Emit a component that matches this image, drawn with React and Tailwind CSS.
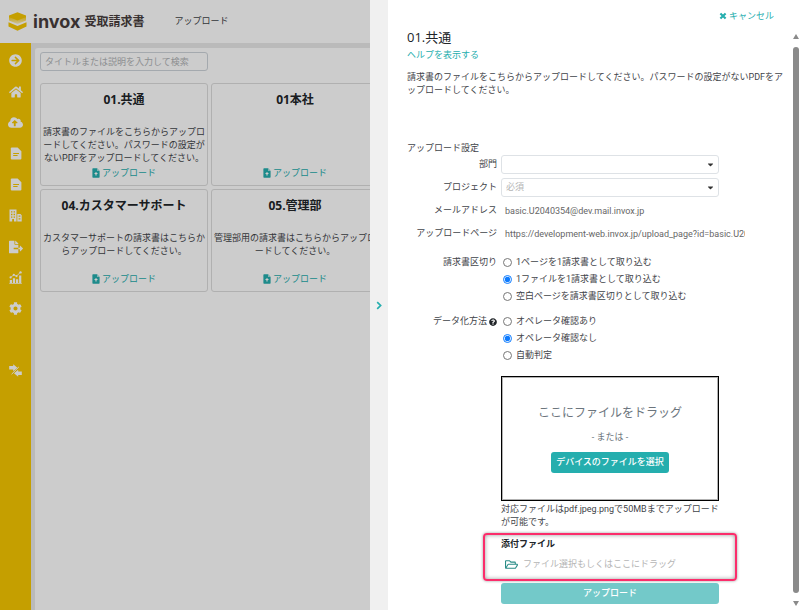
import React, { useState } from 'react';
import {
  FaArrowCircleRight,
  FaCaretDown,
  FaCloudUploadAlt,
  FaCog,
  FaFileExport,
  FaHome,
  FaQuestionCircle,
  FaRegFolderOpen
} from 'react-icons/fa';

const HELP_TEXT = '請求書のファイルをこちらからアップロードしてください。パスワードの設定がないPDFをアップロードしてください。';

const cards = [
  { title: '01.共通', text: HELP_TEXT },
  { title: '01本社', text: '' },
  { title: '04.カスタマーサポート', text: 'カスタマーサポートの請求書はこちらからアップロードしてください。' },
  { title: '05.管理部', text: '管理部用の請求書はこちらからアップロードしてください。' }
];

const splitOptions = [
  '1ページを1請求書として取り込む',
  '1ファイルを1請求書として取り込む',
  '空白ページを請求書区切りとして取り込む'
];

const methodOptions = ['オペレータ確認あり', 'オペレータ確認なし', '自動判定'];

// ロゴマーク
const LogoMark = () => (
  <svg viewBox="0 0 19 19" className="w-[19px] h-[19px]" aria-hidden="true">
    <defs>
      <linearGradient id="logo-fade" x1="0" y1="0" x2="0" y2="1">
        <stop offset="0" stopColor="#f7c700" />
        <stop offset="1" stopColor="#fff3c0" />
      </linearGradient>
    </defs>
    <path d="M1 4 V8.4 L9.5 12 L18 8.4 V4 Z" fill="url(#logo-fade)" />
    <path d="M9.5 0.2 L18 3.6 V5 L9.5 8.6 L1 5 V3.6 Z" fill="#f7c700" />
    <path d="M0.5 10.2 L9.5 14 L18.5 10.2 V14.4 L9.5 18.8 L0.5 14.4 Z" fill="#f7c700" />
  </svg>
);

// 書類アイコン
const DocIcon = () => (
  <svg viewBox="0 0 12 13" className="w-3 h-[13px]" aria-hidden="true">
    <path
      d="M1.8 0.5 H7.6 L11.4 4.2 V11.4 Q11.4 12.4 10.4 12.4 H1.8 Q0.8 12.4 0.8 11.4 V1.5 Q0.8 0.5 1.8 0.5 Z"
      fill="currentColor"
    />
    <path d="M3.2 6 H9 V7 H3.2 Z M3.2 8 H7.6 V9 H3.2 Z" fill="#f7c700" />
  </svg>
);

// 建物アイコン
const BuildingIcon = () => (
  <svg viewBox="0 0 13 13" className="w-[13px] h-[13px]" fill="currentColor" aria-hidden="true">
    <path
      fillRule="evenodd"
      d="M0.5 0.5 H7.5 V12.5 H5 V10 H3.2 V12.5 H0.5 Z M2 2.2 V3.6 H3.4 V2.2 Z M4.6 2.2 V3.6 H6 V2.2 Z M2 4.8 V6.2 H3.4 V4.8 Z M4.6 4.8 V6.2 H6 V4.8 Z M2 7.4 V8.8 H3.4 V7.4 Z M4.6 7.4 V8.8 H6 V7.4 Z"
    />
    <path
      fillRule="evenodd"
      d="M8.3 5 H11.5 L12.7 6.2 V12.5 H8.3 Z M9.6 6.6 V7.8 H11.4 V6.6 Z M9.6 9.2 V10.4 H11.4 V9.2 Z"
    />
  </svg>
);

// グラフアイコン
const ChartIcon = () => (
  <svg viewBox="0 0 13 13" className="w-[13px] h-[13px]" fill="currentColor" aria-hidden="true">
    <path d="M0.8 9 H3 V12 H0.8 Z M3.9 7.2 H6.1 V12 H3.9 Z M7 8.2 H9.2 V12 H7 Z M10.1 4.6 H12.3 V12 H10.1 Z M0.3 12 H12.8 V12.8 H0.3 Z" />
    <path d="M1.4 6.6 L4.8 3.8 L7.4 5.2 L11.6 1.2" fill="none" stroke="currentColor" strokeWidth="0.8" />
    <circle cx="1.6" cy="6.4" r="1.1" />
    <circle cx="4.8" cy="3.9" r="1.1" />
    <circle cx="7.5" cy="5.1" r="1.1" />
    <circle cx="11.5" cy="1.4" r="1.2" />
  </svg>
);

// 切り替えアイコン
const SwapIcon = () => (
  <svg viewBox="0 0 13 13" className="w-[13px] h-[13px]" fill="currentColor" aria-hidden="true">
    <path d="M0.2 2 H4.2 V0.2 L8.4 3.7 L4.2 7.2 V5.4 H0.2 Z" />
    <path d="M12.8 7.6 H9.2 V5.8 L5 9.3 L9.2 12.8 V11 H12.8 Z" />
    <path d="M2.6 10.2 L9.8 3" stroke="currentColor" strokeWidth="1" />
  </svg>
);

// アップロード用ファイルアイコン
const FileUpIcon = () => (
  <svg viewBox="0 0 8 10" className="w-2 h-[10px]" aria-hidden="true">
    <path d="M1 0.3 H5 L7.6 2.9 V9 Q7.6 9.7 6.9 9.7 H1 Q0.4 9.7 0.4 9 V1 Q0.4 0.3 1 0.3 Z" fill="#25aeae" />
    <path d="M5 0.3 V2.9 H7.6 Z" fill="#a5dede" />
    <path d="M4 4 L6 6 H4.6 V7.6 H3.4 V6 H2 Z" fill="#fff" />
  </svg>
);

const CloseIcon = () => (
  <svg viewBox="0 0 8 8" className="w-2 h-2" aria-hidden="true">
    <path d="M1.4 1.4 L6.6 6.6 M6.6 1.4 L1.4 6.6" stroke="currentColor" strokeWidth="2.1" />
  </svg>
);

const ChevronIcon = () => (
  <svg viewBox="0 0 6 9" className="w-[6px] h-[9px]" aria-hidden="true">
    <path d="M1.2 1.2 L4.6 4.5 L1.2 7.8" fill="none" stroke="currentColor" strokeWidth="1.7" />
  </svg>
);

const menuItems = [
  { label: '開く', icon: <FaArrowCircleRight size={13} /> },
  { label: 'ホーム', icon: <FaHome size={14} /> },
  { label: 'アップロード', icon: <FaCloudUploadAlt size={15} /> },
  { label: '請求書', icon: <DocIcon /> },
  { label: '書類', icon: <DocIcon /> },
  { label: '取引先', icon: <BuildingIcon /> },
  { label: '出力', icon: <FaFileExport size={14} /> },
  { label: 'レポート', icon: <ChartIcon /> },
  { label: '設定', icon: <FaCog size={13} /> }
];

const UploadCard = ({ title, text }) => (
  <section className="flex flex-col items-center h-[103px] pt-2 pb-1 px-[2px] border border-[#dcdcdc] rounded-[3px] text-center">
    <h2 className="text-[12px] leading-4 font-bold text-[#212529] font-['Open_Sans','Noto_Sans_CJK_JP',sans-serif]">{title}</h2>
    <p className="mt-[18px] text-[9px] leading-[13px] break-all">{text}</p>
    <a href="#upload" className="mt-auto flex items-center gap-[2px] text-[9px] leading-4 text-[#25aeae]">
      <FileUpIcon />
      アップロード
    </a>
  </section>
);

const SelectField = ({ id, label, placeholder }) => (
  <>
    <label htmlFor={id} className="text-right">{label}</label>
    <div className="relative w-[218px]">
      <select
        id={id}
        defaultValue=""
        className="block w-full h-[19px] px-1 appearance-none bg-white border border-[#dee2e6] rounded-[3px] text-[9px] text-[#b5b5b5]"
      >
        <option value="">{placeholder}</option>
      </select>
      <FaCaretDown size={9} className="absolute right-1 top-[5px] text-[#333] pointer-events-none" />
    </div>
  </>
);

const RadioGroup = ({ name, options, value, onChange }) => (
  <div className="flex flex-col">
    {options.map((option) => (
      <label key={option} className="flex items-center gap-1 h-[17px] pl-[2px] w-fit">
        <input
          type="radio"
          name={name}
          checked={value === option}
          onChange={() => onChange(option)}
          className="w-[9px] h-[9px] accent-[#0d7bff]"
        />
        {option}
      </label>
    ))}
  </div>
);

const App = () => {
  const [split, setSplit] = useState(splitOptions[1]);
  const [method, setMethod] = useState(methodOptions[1]);

  return (
    <div
      lang="ja"
      className="relative flex flex-col min-h-screen overflow-hidden bg-[#e9e9e9] text-[9px] leading-[13px] text-[#3f4449] font-['Roboto','Noto_Sans_CJK_JP',sans-serif]"
    >
      {/* ヘッダー */}
      <header className="flex items-center h-[43px] pl-2 bg-white">
        <LogoMark />
        <span className="ml-[6px] text-[18px] leading-5 font-bold text-[#463c3c] font-['Inter',sans-serif]">invox</span>
        <span className="ml-1 text-[12px] leading-5 font-bold text-[#463c3c]">受取請求書</span>
        <nav className="ml-[30px]">
          <a href="#upload">アップロード</a>
        </nav>
      </header>

      <div className="flex flex-1">
        {/* サイドメニュー */}
        <nav className="flex flex-col items-center w-[31px] pt-[2px] bg-[#f7c700] text-white">
          {menuItems.map((item) => (
            <button key={item.label} type="button" aria-label={item.label} className="grid place-items-center w-full h-[31px]">
              {item.icon}
            </button>
          ))}
          <button type="button" aria-label="切り替え" className="grid place-items-center w-full h-[31px] mt-[31px]">
            <SwapIcon />
          </button>
        </nav>

        <main className="flex-1 mt-[5px] ml-1 pl-[5px] pt-1 bg-white rounded-tl-[3px]">
          <input
            type="text"
            aria-label="検索"
            placeholder="タイトルまたは説明を入力して検索"
            className="block w-[168px] h-[19px] px-1 border border-[#ced4da] rounded-[3px] text-[9px] placeholder:text-[#b0b3b6]"
          />
          <div className="grid grid-cols-[168px_168px] gap-[3px] mt-3">
            {cards.map((card) => (
              <UploadCard key={card.title} title={card.title} text={card.text} />
            ))}
          </div>
        </main>
      </div>

      {/* 背景の暗転 */}
      <div className="absolute inset-0 bg-black/20" />

      {/* アップロードパネル */}
      <aside className="absolute inset-y-0 right-0 flex w-[430px] max-w-full bg-white">
        <button type="button" aria-label="閉じる" className="grid place-items-center w-[18px] bg-[#f0f0f0] text-[#25aeae]">
          <ChevronIcon />
        </button>

        <div className="flex flex-col flex-1 min-w-0 pl-[19px] pt-2">
          <button type="button" className="flex items-center gap-[2px] self-end mr-[17px] h-4 text-[#25aeae]">
            <CloseIcon />
            キャンセル
          </button>
          <h1 className="mt-1 text-[13px] leading-[18px] text-[#212529] font-['Open_Sans','Noto_Sans_CJK_JP',sans-serif]">01.共通</h1>
          <a href="#help" className="mt-[3px] self-start text-[#25aeae]">ヘルプを表示する</a>
          <p className="mt-[9px] break-all">{HELP_TEXT}</p>

          <form className="mt-[45px]" onSubmit={(e) => e.preventDefault()}>
            <h2>アップロード設定</h2>
            <div className="grid grid-cols-[90px_1fr] items-center gap-x-1 gap-y-1">
              <SelectField id="department" label="部門" placeholder="" />
              <SelectField id="project" label="プロジェクト" placeholder="必須" />

              <label htmlFor="email" className="text-right">メールアドレス</label>
              <input id="email" readOnly value="basic.U2040354@dev.mail.invox.jp" className="w-[240px] h-[19px] ml-1 text-[#666]" />

              <label htmlFor="page" className="text-right whitespace-nowrap">アップロードページ</label>
              <input
                id="page"
                readOnly
                value="https://development-web.invox.jp/upload_page?id=basic.U2040354"
                className="w-[240px] h-[19px] ml-1 text-[#666]"
              />
            </div>

            <div role="radiogroup" aria-label="請求書区切り" className="grid grid-cols-[90px_1fr] gap-x-1 mt-[11px]">
              <span className="text-right leading-[17px]">請求書区切り</span>
              <RadioGroup name="split" options={splitOptions} value={split} onChange={setSplit} />
            </div>

            <div role="radiogroup" aria-label="データ化方法" className="grid grid-cols-[90px_1fr] gap-x-1 mt-2">
              <span className="flex items-center justify-end gap-[2px] h-[17px]">
                データ化方法
                <FaQuestionCircle size={8} className="text-[#212529]" />
              </span>
              <RadioGroup name="method" options={methodOptions} value={method} onChange={setMethod} />
            </div>

            <div className="w-[218px] ml-[94px] mt-3">
              {/* ドラッグエリア */}
              <div className="flex flex-col items-center h-[125px] pt-[26px] border border-black outline outline-black/30 -outline-offset-2 text-[#6c757d]">
                <p className="text-[12px] leading-5">ここにファイルをドラッグ</p>
                <p className="mt-2">- または -</p>
                <button type="button" className="mt-2 px-[5px] h-[21px] rounded-[3px] bg-[#25aeae] text-white font-medium">
                  デバイスのファイルを選択
                </button>
              </div>
              <p className="mt-[2px] break-all">対応ファイルはpdf.jpeg.pngで50MBまでアップロードが可能です。</p>

              {/* 添付ファイル */}
              <div className="-mx-[18px] mt-1 h-12 px-4 pt-[3px] border-2 border-[#fb2d6b] rounded-[4px] shadow-[0_0_3px_#0006,inset_0_0_4px_#0006]">
                <h3 className="font-bold text-[#212529]">添付ファイル</h3>
                <label className="flex items-center gap-[5px] mt-[7px] pl-1 text-[#b5b5b5]">
                  <FaRegFolderOpen size={13} className="text-[#2a8c86]" />
                  ファイル選択もしくはここにドラッグ
                  <input type="file" className="sr-only" />
                </label>
              </div>

              <button type="submit" className="block w-full h-[21px] mt-[2px] rounded-[3px] bg-[#73c9c9] text-white font-medium">
                アップロード
              </button>
            </div>
          </form>
        </div>

        {/* スクロールバー */}
        <div className="flex flex-col items-center w-[9px] pt-[34px] pb-1 text-[#8a8a8a]" aria-hidden="true">
          <svg viewBox="0 0 6 5" className="w-[6px] h-[5px]" fill="currentColor"><path d="M3 0 L6 5 H0 Z" /></svg>
          <div className="flex-1 w-[6px] my-2 rounded-full bg-[#8a8a8a]" />
          <svg viewBox="0 0 6 5" className="w-[6px] h-[5px]" fill="currentColor"><path d="M0 0 H6 L3 5 Z" /></svg>
        </div>
      </aside>
    </div>
  );
};

export default App;
